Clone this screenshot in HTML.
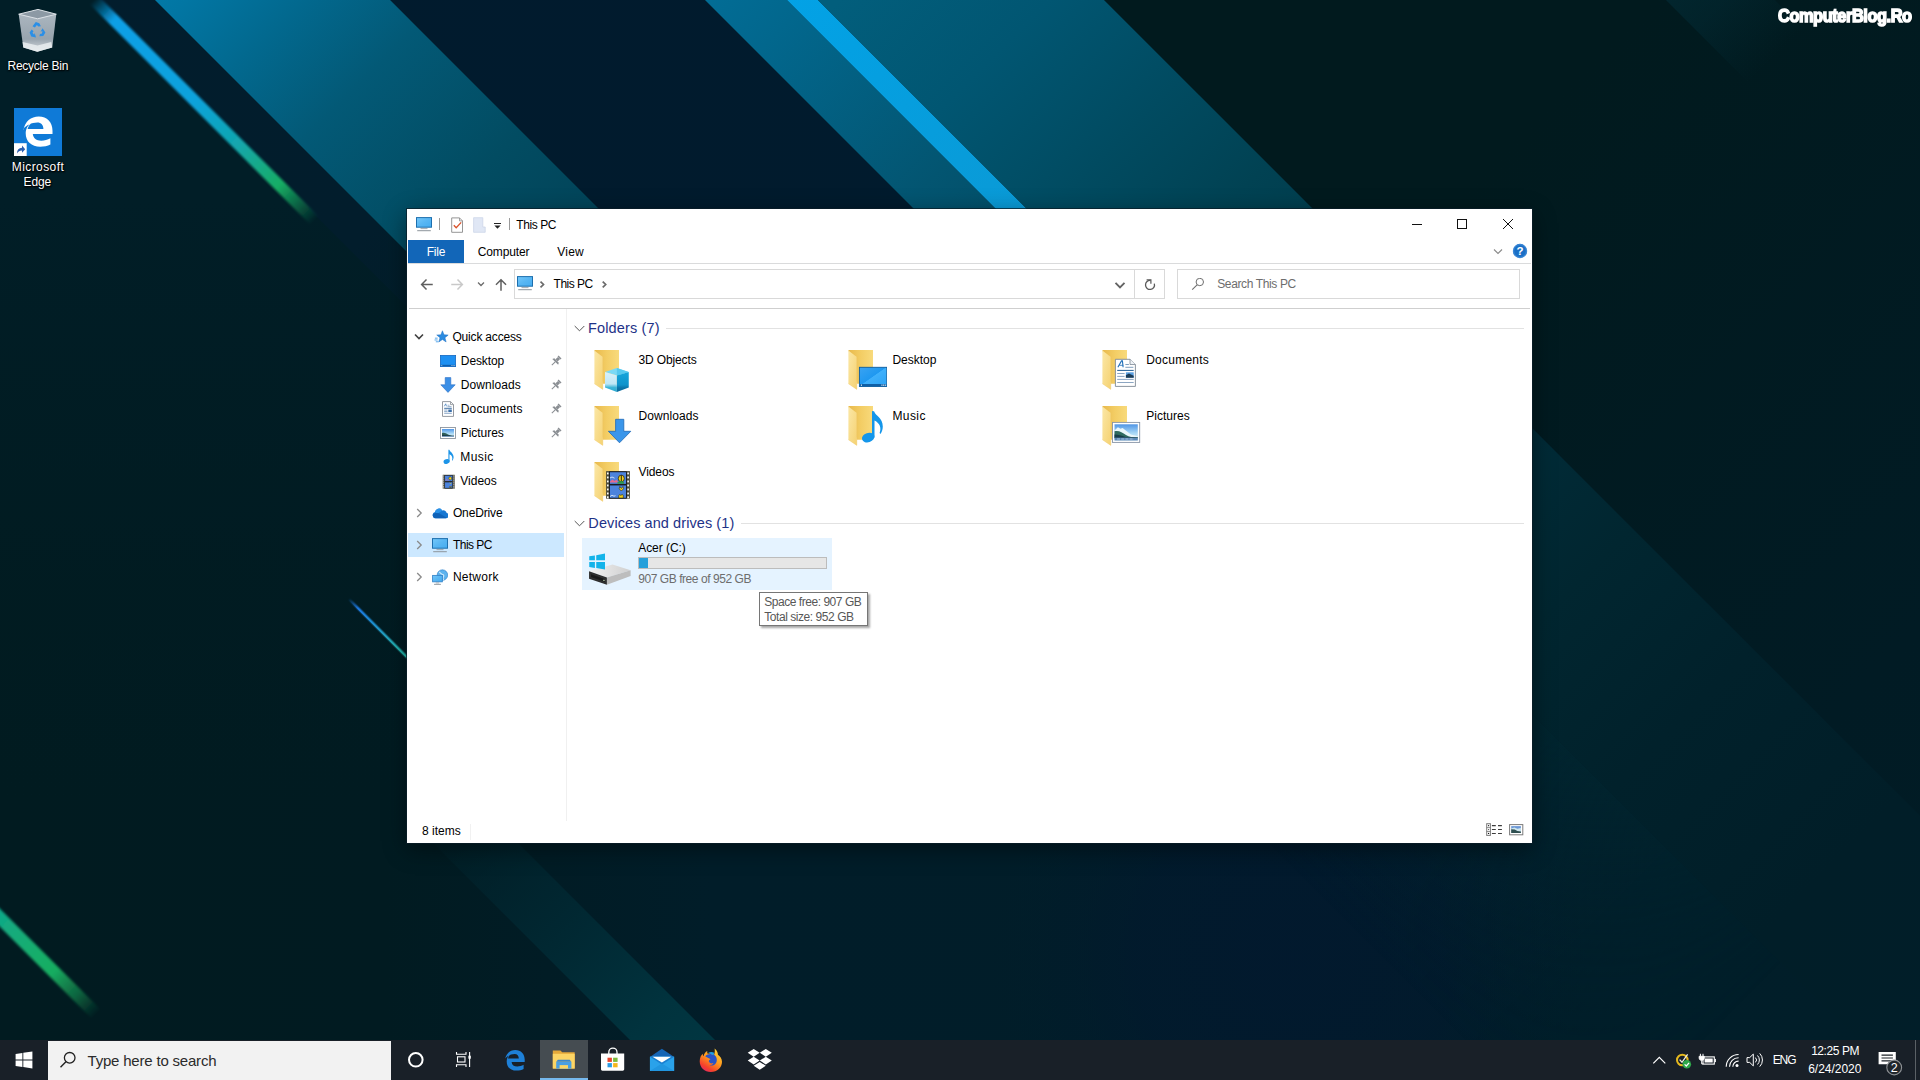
<!DOCTYPE html>
<html>
<head>
<meta charset="utf-8">
<title>This PC</title>
<style>
*{margin:0;padding:0;box-sizing:border-box;}
html,body{width:1920px;height:1080px;overflow:hidden;background:#021c28;font-family:"Liberation Sans",sans-serif;}
#desk{position:absolute;left:0;top:0;width:1920px;height:1080px;overflow:hidden;}
#wall{position:absolute;left:0;top:0;}
.t{position:absolute;white-space:nowrap;line-height:1;font-size:12px;color:#000;transform-origin:0 0;}
.abs{position:absolute;}
.dl{color:#fff;text-shadow:0 1px 2px rgba(0,0,0,.9),0 0 2px rgba(0,0,0,.8),1px 1px 1px rgba(0,0,0,.7);}
/* window */
#win{position:absolute;left:407px;top:209px;width:1125px;height:634px;background:#fff;box-shadow:0 0 0 1px rgba(10,30,40,.75),0 6px 22px rgba(0,0,0,.45);}
#filetab{position:absolute;left:1px;top:31px;width:56px;height:23px;background:#1266b8;}
.hl{position:absolute;height:1px;background:#dadbdc;}
.vl{position:absolute;width:1px;background:#dadbdc;}
/* taskbar */
#tb{position:absolute;left:0;top:1040px;width:1920px;height:40px;background:#192028;}
#tbs{position:absolute;left:48px;top:1px;width:343px;height:39px;background:#f2f2f2;}
</style>
</head>
<body>
<div id="desk">
<!--SYMS-->
<svg width="0" height="0" style="position:absolute">
<defs>
<linearGradient id="fb" x1="0" y1="0" x2="1" y2="0"><stop offset="0" stop-color="#e8b94c"/><stop offset=".5" stop-color="#f3cd64"/><stop offset="1" stop-color="#f8da7c"/></linearGradient>
<linearGradient id="ff" x1="0" y1="0" x2="1" y2="1"><stop offset="0" stop-color="#fbe7a6"/><stop offset="1" stop-color="#f5d272"/></linearGradient>
<linearGradient id="scr" x1="0" y1="0" x2="1" y2="1"><stop offset="0" stop-color="#3aa3f2"/><stop offset=".48" stop-color="#1f98f0"/><stop offset=".5" stop-color="#3fb0fb"/><stop offset="1" stop-color="#2aa2f5"/></linearGradient>
<linearGradient id="pcs" x1="0" y1="0" x2="1" y2="1"><stop offset="0" stop-color="#74c8fa"/><stop offset=".5" stop-color="#58b6f3"/><stop offset="1" stop-color="#45acf0"/></linearGradient>
<linearGradient id="cubL" x1="0" y1="0" x2="0" y2="1"><stop offset="0" stop-color="#d9f1fa"/><stop offset=".6" stop-color="#bfe7f5"/><stop offset=".78" stop-color="#3db6d8"/><stop offset="1" stop-color="#2aa8cf"/></linearGradient>
<linearGradient id="cubR" x1="0" y1="0" x2="0" y2="1"><stop offset="0" stop-color="#16a6dc"/><stop offset=".65" stop-color="#0e93cb"/><stop offset=".8" stop-color="#0a74a8"/><stop offset="1" stop-color="#096a9c"/></linearGradient>
<linearGradient id="sky" x1="0" y1="0" x2="0" y2="1"><stop offset="0" stop-color="#4f95e6"/><stop offset=".55" stop-color="#a8d8f6"/><stop offset="1" stop-color="#e6f4fb"/></linearGradient>
<linearGradient id="hdd" x1="0" y1="0" x2="1" y2="0"><stop offset="0" stop-color="#f2f2f2"/><stop offset="1" stop-color="#cfcfcf"/></linearGradient>
<symbol id="fold" viewBox="0 0 48 48">
<path d="M9.4 5H34v33.7H17.8z" fill="url(#fb)"/>
<path d="M9.4 5.6L17.8 11.9V44.4L9.4 38.7z" fill="url(#ff)"/>
<path d="M17.8 11.9V44.4L9.4 38.7" fill="none" stroke="#f0c866" stroke-width=".4"/>
</symbol>
<symbol id="ov3d" viewBox="0 0 48 48">
<path d="M20 26.900L31.900 23.100 43.750 26.900 31.900 30.600z" fill="#7ad9f5"/>
<path d="M31.900 23.100L43.750 26.900 31.900 30.600z" fill="#56c9ef"/>
<path d="M20 26.900L31.900 30.600V46.900L20 42.500z" fill="url(#cubL)"/>
<path d="M31.900 30.600L43.750 26.900V42.500L31.900 46.900z" fill="url(#cubR)"/>
</symbol>
<symbol id="ovdesk" viewBox="0 0 48 48" overflow="visible"><g transform="translate(1.1,0)">
<rect x="19.3" y="22.3" width="27.4" height="19.2" fill="url(#scr)" stroke="#0d5c9c" stroke-width=".9"/>
<rect x="19.8" y="39" width="26.4" height="2.2" fill="#0f5fa6"/>
<rect x="20.8" y="39.6" width="1.1" height="1.1" fill="#fff"/><rect x="41.3" y="39.6" width="1.1" height="1.1" fill="#fff"/><rect x="43" y="39.6" width="1.1" height="1.1" fill="#fff"/><rect x="44.7" y="39.6" width="1.1" height="1.1" fill="#fff"/>
</g></symbol>
<symbol id="ovdoc" viewBox="0 0 48 48"><g transform="translate(1.9,0)">
<path d="M20.5 14.3h14.6l5.4 5.2v21.9h-20z" fill="#fff" stroke="#7d8894" stroke-width=".9"/>
<path d="M35.1 14.3v5.2h5.4" fill="#eef2f6" stroke="#7d8894" stroke-width=".8"/>
<path d="M23 22.3l3.6-6.4h.9l.7 6.4" fill="none" stroke="#2370b8" stroke-width="1.1"/><path d="M24.4 20.3h4" stroke="#2370b8" stroke-width=".8"/>
<path d="M30.5 19.5h3.5M30.5 22.3h8" stroke="#5f86ad" stroke-width=".8"/>
<path d="M22.3 25.4h16.5" stroke="#1f5c94" stroke-width="1"/>
<path d="M22.3 28.5h7.4M22.3 31.4h7.4M22.3 34.4h16.5M22.3 37.5h16.5" stroke="#6f8fb2" stroke-width=".8"/>
<rect x="31" y="27.3" width="7.8" height="5.4" fill="#5b9fe0"/><path d="M31 32.7v-2.5l3-1.6 4.8 2.2v1.9z" fill="#1c3c56"/>
</g></symbol>
<symbol id="ovdl" viewBox="0 0 48 48">
<path d="M30.6 18.3h8.2v12h7L34.5 41.8 23.4 30.3h7.2z" fill="#3a96ea" stroke="#1e68b6" stroke-width=".8" stroke-linejoin="miter"/>
</symbol>
<symbol id="ovmus" viewBox="0 0 48 48">
<ellipse cx="29.2" cy="36.6" rx="6.4" ry="4.7" transform="rotate(-18 29.2 36.6)" fill="#1496ea"/>
<path d="M33 36.5V10.4c.5-.5 1.6-.5 2.2.2 1.200 4.200 8.600 6.400 8.600 14.800 0 3.200-1.100 5.600-2.300 7.600l-.9-.9c2-5.400.300-9.800-5.100-12.600v17z" fill="#1496ea"/>
</symbol>
<symbol id="ovpic" viewBox="0 0 48 48">
<rect x="19.5" y="21.4" width="27.2" height="20" fill="#fff" stroke="#8693a6" stroke-width=".9"/>
<rect x="21.5" y="23.3" width="23.3" height="16.2" fill="url(#sky)"/>
<path d="M21.500 29.500l3.400-3.200 2.500 1.400 2.200-.6 3.500 2.700 4.800 3.600 6.900 1.900v1.500h-23.300z" fill="#e9f6fa"/>
<path d="M21.500 30.300c2.200-.4 4.700-.3 6.900.9 3.100 1.700 5.900 4.100 9.700 4.700l6.700.4v.9h-23.300z" fill="#2f6a5e"/>
<path d="M21.500 33.500c3.500 0 7.500 1.200 11 2.500l12.300.4v.5h-23.300z" fill="#173c48"/>
<rect x="21.5" y="36.700" width="23.3" height="2.800" fill="#5b87b5"/><path d="M24 38h17" stroke="#a9c6e0" stroke-width=".9" stroke-dasharray="3 1.200"/>
</symbol>
<symbol id="ovvid" viewBox="0 0 48 48">
<rect x="21.100" y="14.100" width="23.800" height="27.600" fill="#4b4a38"/>
<rect x="24.400" y="14.800" width="17" height="12.500" fill="#4c83dc" stroke="#111" stroke-width=".8"/>
<rect x="24.400" y="28" width="17" height="13.200" fill="#4c83dc" stroke="#111" stroke-width=".8"/>
<g fill="#fff"><rect x="22" y="15.500" width="1.600" height="1.900"/><rect x="22" y="19.500" width="1.600" height="1.900"/><rect x="22" y="23.500" width="1.600" height="1.900"/><rect x="22" y="27.500" width="1.600" height="1.900"/><rect x="22" y="31.500" width="1.600" height="1.900"/><rect x="22" y="35.500" width="1.600" height="1.900"/><rect x="22" y="39.300" width="1.600" height="1.900"/>
<rect x="42.300" y="15.500" width="1.600" height="1.900"/><rect x="42.300" y="19.500" width="1.600" height="1.900"/><rect x="42.300" y="23.500" width="1.600" height="1.900"/><rect x="42.300" y="27.500" width="1.600" height="1.900"/><rect x="42.300" y="31.500" width="1.600" height="1.900"/><rect x="42.300" y="35.500" width="1.600" height="1.900"/><rect x="42.300" y="39.300" width="1.600" height="1.900"/></g>
<ellipse cx="36.300" cy="21.500" rx="3" ry="3.400" fill="#f2d21c" stroke="#111" stroke-width=".7"/><path d="M36.300 18.200v6.600" stroke="#111" stroke-width=".9"/>
<path d="M25 24.500l2.500-2 2 1.500 2-1.200 2 2.700h-8.500z" fill="#e86a8a"/><path d="M25 21l2-1 2.500 1.200" stroke="#dce9f7" stroke-width=".9" fill="none"/>
<path d="M32.500 26.800h6.500v-1.700l-2.800-1-3.700.9z" fill="#2e9a4c"/>
<path d="M34.800 29.500l1.500 2 1.600-2 .6 2.300-2.200 2.200-2.100-2.200z" fill="#f2d21c" stroke="#111" stroke-width=".5"/>
<path d="M33.700 41v-2.200c.6-1.500 1.500-1.700 2.200-.2.700-1.600 1.700-1.600 2.400.1v2.300z" fill="#f2d21c" stroke="#111" stroke-width=".5"/>
<path d="M25 39.500l2-1.200 2 .9 1.500-.5" stroke="#dce9f7" stroke-width=".9" fill="none"/>
</symbol>
<!-- small 16px icons -->
<symbol id="pc16" viewBox="0 0 16 16">
<rect x=".5" y="1.600" width="15" height="9.600" fill="url(#pcs)" stroke="#1d6fae" stroke-width="1"/>
<rect x="4.500" y="12.200" width="7" height=".9" fill="#9aa0a6"/><rect x="1.200" y="14.200" width="13.600" height="1" fill="#8d959c"/>
</symbol>
<symbol id="star16" viewBox="0 0 16 16">
<path d="M9.300.8l1.800 4.500 4.700.2-3.700 3 1.300 4.700-4.100-2.700-4 2.700 1.300-4.700L3 5.500l4.600-.2z" fill="#2b8be0" stroke="#1f6fc0" stroke-width=".5"/>
<path d="M1 9h3M.6 11h3.400M2 13h3" stroke="#49a0ea" stroke-width="1"/>
</symbol>
<symbol id="desk16" viewBox="0 0 16 16">
<rect x=".4" y="2.400" width="15.200" height="11.200" fill="#1e90f2" stroke="#1668c0" stroke-width=".8"/>
<rect x=".8" y="11.800" width="14.400" height="1.500" fill="#0f5fae"/><rect x="1.400" y="12.200" width=".8" height=".7" fill="#fff"/><rect x="11.500" y="12.200" width=".7" height=".7" fill="#fff"/><rect x="12.700" y="12.200" width=".7" height=".7" fill="#fff"/><rect x="13.900" y="12.200" width=".7" height=".7" fill="#fff"/>
</symbol>
<symbol id="dl16" viewBox="0 0 16 16">
<path d="M5.200.6h5.600v7.200h4.400L8 15.400.8 7.800h4.400z" fill="#3b8fe6" stroke="#2a6fc4" stroke-width=".6"/>
</symbol>
<symbol id="doc16" viewBox="0 0 16 16">
<path d="M2.500.6h8l3 3v11.800h-11z" fill="#fff" stroke="#8a8f96" stroke-width=".9"/><path d="M10.500.6v3h3" fill="none" stroke="#8a8f96" stroke-width=".8"/>
<path d="M4.300 5.300l1.400-2.500.8 2.500" fill="none" stroke="#3574b8" stroke-width=".7"/><path d="M7.500 4.200h2M7.500 5.600h4" stroke="#6f92ba" stroke-width=".7"/>
<path d="M4.200 7.300h7.600" stroke="#2a5f98" stroke-width=".9"/><path d="M4.200 9h3.300M4.200 10.600h3.300M4.200 12.300h7.600" stroke="#6f92ba" stroke-width=".8"/><rect x="8.300" y="8.500" width="3.500" height="2.500" fill="#3a6ea8"/>
</symbol>
<symbol id="pic16" viewBox="0 0 16 16">
<rect x=".5" y="2.500" width="15" height="11" fill="#fff" stroke="#8c949e" stroke-width=".9"/>
<rect x="2" y="4" width="12" height="8" fill="url(#sky)"/><path d="M2 8c2-.8 4 0 6 1.500 1.500 1 4 1.300 6 1.300v.4H2z" fill="#2f5f5a"/><path d="M2 9.800c3 0 6 .8 12 1V12H2z" fill="#1d3e4c"/><rect x="2" y="11" width="12" height="1" fill="#7a9cbd"/>
</symbol>
<symbol id="mus16" viewBox="0 0 16 16">
<ellipse cx="5.600" cy="12.500" rx="3.100" ry="2.300" transform="rotate(-18 5.600 12.500)" fill="#1c94e8"/>
<path d="M7.400 12.600V.8c.4-.3.900-.2 1.100.2.600 2 4.100 3.200 4.100 7.100 0 1.500-.5 2.700-1.100 3.600l-.5-.4c.9-2.600.1-4.700-2.500-6v7.300z" fill="#1c94e8"/>
</symbol>
<symbol id="vid16" viewBox="0 0 16 16">
<rect x="1.800" y=".8" width="12.400" height="14.400" fill="#4b4a3a"/>
<rect x="3.900" y="1.400" width="8.200" height="6.100" fill="#4c83dc" stroke="#111" stroke-width=".5"/><rect x="3.900" y="8.300" width="8.200" height="6.300" fill="#4c83dc" stroke="#111" stroke-width=".5"/>
<g fill="#fff"><rect x="2.300" y="1.600" width=".9" height="1"/><rect x="2.300" y="3.700" width=".9" height="1"/><rect x="2.300" y="5.800" width=".9" height="1"/><rect x="2.300" y="7.900" width=".9" height="1"/><rect x="2.300" y="10" width=".9" height="1"/><rect x="2.300" y="12.100" width=".9" height="1"/><rect x="2.300" y="13.900" width=".9" height=".9"/>
<rect x="12.800" y="1.600" width=".9" height="1"/><rect x="12.800" y="3.700" width=".9" height="1"/><rect x="12.800" y="5.800" width=".9" height="1"/><rect x="12.800" y="7.900" width=".9" height="1"/><rect x="12.800" y="10" width=".9" height="1"/><rect x="12.800" y="12.100" width=".9" height="1"/><rect x="12.800" y="13.900" width=".9" height=".9"/></g>
<ellipse cx="9.500" cy="4.500" rx="1.400" ry="1.700" fill="#f2d21c" stroke="#111" stroke-width=".4"/><path d="M4.300 6.500l1.300-1 1 .7 1-.5.800.8z" fill="#e86a8a"/><path d="M8.500 13.800c.4-1.500 1-1.500 1.300 0 .4-1.500 1-1.500 1.400 0z" fill="#f2d21c" stroke="#111" stroke-width=".3"/><path d="M9 9l.8 1 .8-1" stroke="#f2d21c" stroke-width=".7" fill="none"/>
</symbol>
<symbol id="od16" viewBox="0 0 16 12">
<path d="M3.600 11.200A3.100 3.100 0 0 1 3 5.100 3.900 3.900 0 0 1 10.300 3.600a3.300 3.300 0 0 1 4.400 2.300 2.700 2.700 0 0 1-.9 5.300z" fill="#1677d2"/>
<path d="M3 5.100A3.900 3.900 0 0 1 10.300 3.600l-4.800 3.200z" fill="#2a92e8"/>
<path d="M.9 7.300c2.600-1.800 5.600-1.600 8.300.2l5.500 3.300c-.3.300-.6.400-.9.400H3.600A3.100 3.100 0 0 1 .9 7.300z" fill="#0f62b8"/>
</symbol>
<symbol id="net16" viewBox="0 0 16 16">
<circle cx="10.300" cy="6" r="5.200" fill="#5db3ee" stroke="#2d7fc8" stroke-width=".6"/><path d="M7 2.800c1.300 1 1.600 2.200 3.200 2.500 1.600.2 1.800 1.600 1 2.700-.7.900-.2 2 .4 2.800" fill="none" stroke="#cfe9fb" stroke-width="1.100"/>
<rect x=".6" y="6.300" width="9.600" height="6.400" fill="url(#pcs)" stroke="#2f7fc6" stroke-width=".8"/><rect x="3.700" y="13.400" width="3.400" height=".8" fill="#9aa0a6"/><rect x="2" y="14.700" width="6.800" height=".9" fill="#8d959c"/>
</symbol>
<symbol id="pin" viewBox="0 0 12 12">
<g transform="rotate(45 6 6)" fill="#8a8e93"><rect x="3.900" y=".3" width="4.200" height="1.400"/><rect x="4.500" y="1.700" width="3" height="3.500"/><path d="M2.800 5.200h6.400l.9 1.900H1.900z"/><rect x="5.500" y="7.100" width="1" height="4.800"/></g>
</symbol>
</defs>
</svg>
<!--/SYMS-->
<!--WALL-->
<svg id="wall" width="1920" height="1080" viewBox="0 0 1920 1080">
<defs>
<linearGradient id="gbase" x1="0" y1="0" x2="1920" y2="0" gradientUnits="userSpaceOnUse">
<stop offset="0" stop-color="#011b20"/><stop offset=".2" stop-color="#011b21"/><stop offset=".37" stop-color="#011d29"/><stop offset="1" stop-color="#011e29"/>
</linearGradient>
<linearGradient id="gleft" x1="0" y1="200" x2="0" y2="800" gradientUnits="userSpaceOnUse">
<stop offset="0" stop-color="#011e27" stop-opacity="1"/><stop offset="1" stop-color="#011c22" stop-opacity="0"/>
</linearGradient>
<linearGradient id="gUR" x1="0" y1="0" x2="2121" y2="0" gradientUnits="userSpaceOnUse">
<stop offset="0" stop-color="#011a1e"/><stop offset=".55" stop-color="#011a1e"/><stop offset=".85" stop-color="#011b24"/><stop offset="1" stop-color="#011c26"/>
</linearGradient>

<linearGradient id="gD" x1="0" y1="0" x2="2121" y2="0" gradientUnits="userSpaceOnUse">
<stop offset="0" stop-color="#011b2e"/><stop offset=".45" stop-color="#011b2d"/><stop offset=".62" stop-color="#011d2a" stop-opacity=".5"/><stop offset=".7" stop-color="#011d29" stop-opacity="0"/>
</linearGradient>
<linearGradient id="gN" x1="0" y1="0" x2="2121" y2="0" gradientUnits="userSpaceOnUse"><stop offset="0" stop-color="#021d2d"/><stop offset=".2" stop-color="#021d2c"/><stop offset=".34" stop-color="#011e28" stop-opacity="0"/></linearGradient>
<linearGradient id="gRay" x1="1170" y1="0" x2="1295" y2="0" gradientUnits="userSpaceOnUse"><stop offset="0" stop-color="#03303c" stop-opacity=".55"/><stop offset=".4" stop-color="#03303c" stop-opacity=".4"/><stop offset="1" stop-color="#03303c" stop-opacity="0"/></linearGradient>
<radialGradient id="gNav" cx="1290" cy="960" r="300" gradientUnits="userSpaceOnUse"><stop offset="0" stop-color="#02192e" stop-opacity=".95"/><stop offset=".5" stop-color="#02192e" stop-opacity=".7"/><stop offset="1" stop-color="#011c2b" stop-opacity="0"/></radialGradient>
<linearGradient id="gW1" x1="0" y1="0" x2="2121" y2="0" gradientUnits="userSpaceOnUse">
<stop offset="0" stop-color="#0384b8"/><stop offset=".062" stop-color="#0276a3"/><stop offset=".1" stop-color="#02698f"/><stop offset=".148" stop-color="#035976"/><stop offset=".217" stop-color="#024c62"/><stop offset=".32" stop-color="#023c50"/><stop offset=".45" stop-color="#012c3c"/><stop offset=".62" stop-color="#011f2c" stop-opacity="0"/>
</linearGradient>
<linearGradient id="gB1" x1="0" y1="0" x2="2121" y2="0" gradientUnits="userSpaceOnUse">
<stop offset=".22" stop-color="#026f99"/><stop offset=".27" stop-color="#02678d"/><stop offset=".37" stop-color="#035571"/><stop offset=".5" stop-color="#024052"/><stop offset=".62" stop-color="#012e3b" stop-opacity=".8"/><stop offset=".72" stop-color="#012630" stop-opacity="0"/>
</linearGradient>
<linearGradient id="gB2" x1="0" y1="0" x2="2121" y2="0" gradientUnits="userSpaceOnUse">
<stop offset=".22" stop-color="#02a4ea"/><stop offset=".3" stop-color="#04a0e2"/><stop offset=".41" stop-color="#0a9ad6"/><stop offset=".55" stop-color="#0877a4" stop-opacity=".8"/><stop offset=".7" stop-color="#033040" stop-opacity="0"/>
</linearGradient>
<linearGradient id="gGlow" x1="0" y1="-578.400" x2="0" y2="-300" gradientUnits="userSpaceOnUse">
<stop offset="0" stop-color="#012630" stop-opacity=".9"/><stop offset=".5" stop-color="#012330" stop-opacity=".4"/><stop offset="1" stop-color="#011e29" stop-opacity="0"/>
</linearGradient>
<linearGradient id="gGlowS" x1="1400" y1="0" x2="2121" y2="0" gradientUnits="userSpaceOnUse">
<stop offset="0" stop-color="#fff" stop-opacity="1"/><stop offset=".3" stop-color="#fff" stop-opacity="1"/><stop offset=".75" stop-color="#fff" stop-opacity="0"/>
</linearGradient>
<mask id="mGlow" maskUnits="userSpaceOnUse" x="1400" y="-600" width="760" height="340"><rect x="1400" y="-600" width="760" height="340" fill="url(#gGlowS)"/></mask>
<linearGradient id="gB3" x1="0" y1="0" x2="2121" y2="0" gradientUnits="userSpaceOnUse">
<stop offset=".28" stop-color="#025e7c"/><stop offset=".35" stop-color="#015672"/><stop offset=".477" stop-color="#014253"/><stop offset=".6" stop-color="#013240"/><stop offset=".66" stop-color="#012b37"/><stop offset=".72" stop-color="#012630"/><stop offset=".8" stop-color="#01212b"/><stop offset=".9" stop-color="#011e28"/><stop offset="1" stop-color="#011e29"/>
</linearGradient>
<linearGradient id="gF" x1="0" y1="0" x2="2121" y2="0" gradientUnits="userSpaceOnUse">
<stop offset=".41" stop-color="#012630" stop-opacity="0"/><stop offset=".47" stop-color="#012832" stop-opacity=".65"/><stop offset=".557" stop-color="#01333e"/><stop offset=".63" stop-color="#013b47"/>
</linearGradient>
<linearGradient id="gA" x1="0" y1="0" x2="312" y2="0" gradientUnits="userSpaceOnUse">
<stop offset="0" stop-color="#0a9fe6" stop-opacity="0"/><stop offset=".09" stop-color="#0a9fe6"/><stop offset=".45" stop-color="#0ea2dc"/><stop offset=".65" stop-color="#12a6ae"/><stop offset=".84" stop-color="#16ad64"/><stop offset="1" stop-color="#16ad62" stop-opacity="0"/>
</linearGradient>
<linearGradient id="gL" x1="670" y1="0" x2="900" y2="0" gradientUnits="userSpaceOnUse">
<stop offset="0" stop-color="#1d78e0" stop-opacity="0"/><stop offset=".06" stop-color="#1d78e0"/><stop offset=".3" stop-color="#22b0b0"/><stop offset=".5" stop-color="#22c090"/><stop offset="1" stop-color="#22c090"/>
</linearGradient>
<linearGradient id="gG" x1="560" y1="0" x2="790" y2="0" gradientUnits="userSpaceOnUse">
<stop offset="0" stop-color="#0fa58c"/><stop offset=".36" stop-color="#10a888"/><stop offset=".62" stop-color="#17ae6a"/><stop offset=".72" stop-color="#18ac60"/><stop offset=".86" stop-color="#168c50" stop-opacity=".65"/><stop offset=".98" stop-color="#147a48" stop-opacity="0"/>
</linearGradient>
<filter id="bl1" x="-5%" y="-50%" width="110%" height="200%"><feGaussianBlur stdDeviation=".9"/></filter>
<filter id="bl05" x="-5%" y="-80%" width="110%" height="260%"><feGaussianBlur stdDeviation=".6"/></filter>
</defs>
<rect width="1920" height="1080" fill="url(#gbase)"/>
<rect width="760" height="1080" fill="url(#gleft)"/>
<rect x="900" y="640" width="800" height="440" fill="url(#gNav)"/>
<g transform="rotate(45)">
<!-- d = -c/1.4142 -->
<rect x="0" y="-1400" width="2121" height="619.400" fill="url(#gUR)"/>
<rect x="1100" y="-1255" width="300" height="77" fill="url(#gRay)"/>
<rect x="1400" y="-578.400" width="721" height="278.400" fill="url(#gGlow)" mask="url(#mGlow)"/>
<rect x="0" y="-498.500" width="2121" height="222.700" fill="url(#gD)"/>
<rect x="0" y="-109.600" width="2121" height="38.900" fill="url(#gN)"/>
<rect x="0" y="-275.800" width="2121" height="166.200" fill="url(#gW1)"/>
<rect x="0" y="-556.500" width="2121" height="58" fill="url(#gB1)"/>
<rect x="0" y="-578.400" width="2121" height="21.900" fill="url(#gB2)"/>
<rect x="0" y="-780.600" width="2121" height="202.200" fill="url(#gB3)"/>
<rect x="0" y="229.800" width="2121" height="60.100" fill="url(#gF)"/>
<rect x="670" y="175.600" width="300" height="2.600" fill="url(#gL)" filter="url(#bl05)"/>
<rect x="560" y="642.600" width="240" height="12.800" fill="url(#gG)" filter="url(#bl1)"/>
</g>
<g transform="translate(94,0) rotate(45)"><rect x="0" y="-5.900" width="312" height="11.800" fill="url(#gA)" filter="url(#bl1)"/></g>
</svg>
<!--/WALL-->
<!--DESKICONS-->
<svg class="abs" style="left:14px;top:6px" width="48" height="48" viewBox="0 0 48 48"><defs><linearGradient id="rb" x1="0" y1="0" x2="0" y2="1"><stop offset="0" stop-color="#aeb9c2"/><stop offset=".7" stop-color="#98a4ae"/><stop offset="1" stop-color="#d9dee2"/></linearGradient></defs>
<path d="M4.700 8.200L24 3.400 42.300 8.200 38.200 41.500 23.300 45.800 9.300 41.500z" fill="url(#rb)"/>
<path d="M4.700 8.200L24 3.400 42.300 8.200 23.600 12.800z" fill="#8c99a4" stroke="#e3e8ec" stroke-width=".9"/>
<path d="M9.300 41.500l14 4.300 14.900-4.300-1-5.500-13.700 3.400L8.600 36z" fill="#e9edf0" opacity=".85"/>
<g fill="#2b8fe6"><path d="M18.500 20.300l3.300-4.300 3.500 1.200 1.600 3-2.600.4-1.400-1.700-2 2.700z"/><path d="M28.600 22.200l2.800 4.400-2.100 3.300-3.900.3.600-2.300 2-.3.400-2.500-1.900.6z"/><path d="M22 31.600l-4.800-1.200-1.600-3.900 2.100-3 1.800 1.700-1 1.600 1.600 1.900.6-1.700z"/></g>
</svg>
<div class="t dl" id="d_rb" style="left:7.52px;top:59.80px;letter-spacing:-0.250px">Recycle Bin</div>
<div class="abs" style="left:14px;top:108px;width:48px;height:48px;background:#0f7ad7"></div>
<svg class="abs" style="left:14px;top:108px" width="48" height="48" viewBox="0 0 48 48"><path d="M9.300 22.300C10.800 13.500 17 8.500 24.700 8.500c8.500 0 13.800 6 13.800 14.200v3.400H18.800c.4 4.300 3.700 6.700 8.400 6.700 3.400 0 6.400-.9 9.200-2.500v6.200c-2.900 1.500-6.400 2.200-10.200 2.200-8.800 0-14.500-5.100-14.500-13.400 0-4.800 2.300-8.700 6.400-10.900-2.400 1.900-3.900 3.900-4.500 6.700h15.800c0-3.900-2.200-6.500-6.100-6.500-5.700 0-11.200 2.900-14 6.300z" fill="#fff"/>
<rect x="0" y="35.200" width="12.700" height="12.800" fill="#fff"/><path d="M3 45.500c0-3.500 1.800-5.600 5-5.700v-2.200l3.200 3.600-3.200 3.500v-2.300c-2.300 0-3.800.9-5 3.100z" fill="#2a5fb0"/></svg>
<div class="t dl" id="d_ms" style="left:11.82px;top:161.00px;letter-spacing:0.409px">Microsoft</div>
<div class="t dl" id="d_edge" style="left:23.62px;top:176px;letter-spacing:-0.159px">Edge</div>
<div class="t" id="wm" style="left:1777.5px;top:6.1px;font-size:19px;font-weight:bold;color:#fff;letter-spacing:-.5px;-webkit-text-stroke:1.6px #fff;text-shadow:1px 1px 1px rgba(0,0,0,.5);transform:scaleX(.862)">ComputerBlog.Ro</div>
<!--/DESKICONS-->
<!--WINDOW-->
<div id="win">
<!-- title bar -->
<svg class="abs" style="left:9px;top:6.700px" width="16" height="16"><use href="#pc16"/></svg>
<svg class="abs" style="left:43px;top:7px" width="54" height="18" viewBox="0 0 54 18">
<path d="M1.700 1.900h7.800l3 3v11.400H1.700z" fill="#fff" stroke="#8a8a8a" stroke-width=".9"/><path d="M9.500 1.900v3h3" fill="none" stroke="#8a8a8a" stroke-width=".8"/>
<path d="M3.800 9.200l2.400 2.600 5-5.400" fill="none" stroke="#d9532c" stroke-width="1.300"/>
<path d="M23.600 1.700h9.200v9.300h2.400v5.300H23.600z" fill="#e0e7f5" stroke="#cdd6e8" stroke-width=".8"/>
<rect x="44" y="7" width="7" height="1" fill="#222"/><path d="M44.400 9.600h6.200l-3.100 3.200z" fill="#222"/>
</svg>
<div class="vl" style="left:32px;top:9px;height:12px;background:#9a9a9a"></div>
<div class="vl" style="left:102px;top:9px;height:12px;background:#9a9a9a"></div>
<div class="t" id="t_title" style="left:109.22px;top:9.85px;letter-spacing:-0.419px">This PC</div>
<svg class="abs" style="left:1000px;top:5px" width="120" height="22" viewBox="0 0 120 22"><g stroke="#111" stroke-width="1" fill="none"><path d="M5 10.5h10"/><rect x="50.5" y="5.5" width="9" height="9"/><path d="M96 5l10 10M106 5l-10 10"/></g></svg>
<!-- ribbon tabs -->
<div id="filetab"></div>
<div class="t" id="t_file" style="left:19.72px;top:37px;color:#fff;letter-spacing:-0.178px">File</div>
<div class="t" id="t_computer" style="left:70.72px;top:37px;letter-spacing:-0.125px">Computer</div>
<div class="t" id="t_view" style="left:150.22px;top:37px;letter-spacing:0.251px">View</div>
<svg class="abs" style="left:1086px;top:38.600px" width="10" height="8" viewBox="0 0 10 8"><path d="M1 1.5l4 4 4-4" stroke="#8a8a8a" stroke-width="1.1" fill="none"/></svg>
<svg class="abs" style="left:1105px;top:34px" width="16" height="16" viewBox="0 0 16 16"><circle cx="8" cy="8" r="7.2" fill="#1a6fc6"/><circle cx="8" cy="8" r="6.4" fill="none" stroke="#5aa0e6" stroke-width=".6"/><text x="8" y="12" text-anchor="middle" font-family="Liberation Sans" font-weight="bold" font-size="11.5" fill="#fff">?</text></svg>
<div class="hl" style="left:1px;top:54px;width:1123px"></div>
<!-- nav row -->
<svg class="abs" style="left:12px;top:68px" width="90" height="16" viewBox="0 0 90 16"><g fill="none" stroke-width="1.5" stroke-linecap="square"><path d="M3 7.5h10M7 3L2.6 7.5 7 12" stroke="#5f5f5f"/><path d="M33 7.5h10M39 3l4.4 4.5L39 12" stroke="#c9c9c9"/><path d="M59.5 6l2.5 2.5L64.5 6" stroke="#6a6a6a" stroke-width="1.3"/><path d="M82 13V3M77.5 7.2L82 2.8l4.5 4.4" stroke="#5f5f5f"/></g></svg>
<div class="abs" style="left:107px;top:60px;width:651px;height:30px;border:1px solid #d9d9d9;"></div>
<div class="vl" style="left:727px;top:61px;height:28px;background:#d9d9d9"></div>
<svg class="abs" style="left:110px;top:65.500px" width="16" height="16"><use href="#pc16"/></svg>
<svg class="abs" style="left:132px;top:71px" width="70" height="9" viewBox="0 0 70 9"><g fill="none" stroke="#6a6a6a" stroke-width="1.700"><path d="M1.500 1.600l3 2.900-3 2.900"/><path d="M63.700 1.600l3 2.900-3 2.900"/></g></svg>
<div class="t" id="t_addr" style="left:146.62px;top:69px;letter-spacing:-0.503px">This PC</div>
<svg class="abs" style="left:707px;top:72px" width="12" height="8" viewBox="0 0 12 8"><path d="M1.500 1.800L6 6.300l4.500-4.500" stroke="#636363" stroke-width="1.900" fill="none"/></svg>
<svg class="abs" style="left:736px;top:69px" width="14" height="14" viewBox="0 0 14 14"><path d="M7.600 2.500A4.500 4.500 0 1 0 11.300 5.600" stroke="#5a5a5a" stroke-width="1.300" fill="none"/><path d="M3.600 1.900H7.900V5.800" stroke="#5a5a5a" stroke-width="1.200" fill="none"/></svg>
<div class="abs" style="left:770px;top:60px;width:343px;height:30px;border:1px solid #d9d9d9;"></div>
<svg class="abs" style="left:784px;top:69px" width="14" height="13" viewBox="0 0 14 13"><circle cx="8.800" cy="4" r="3.700" stroke="#6f6f6f" stroke-width="1" fill="none"/><path d="M6.100 6.800L1.200 11.700" stroke="#6f6f6f" stroke-width="1.100"/></svg>
<div class="t" id="t_search" style="left:810.22px;top:69px;color:#6d6d6d;letter-spacing:-0.373px">Search This PC</div>
<div class="hl" style="left:2px;top:99px;width:1121px;background:#cfcfcf"></div>
<!-- nav pane -->
<div class="vl" style="left:159px;top:100px;height:512px;background:#f0f0f0"></div>
<div class="abs" style="left:1px;top:324px;width:156px;height:24px;background:#cce8ff"></div>
<!--NAV-->
<svg class="abs" style="left:7px;top:124px" width="10" height="8" viewBox="0 0 10 8"><path d="M1 1.500l4 4 4-4" stroke="#404040" stroke-width="1.600" fill="none"/></svg>
<svg class="abs" style="left:27px;top:120.5px" width="14.5" height="14.5"><use href="#star16"/></svg>
<div class="t" id="n_qa" style="left:45.48px;top:121.85px;letter-spacing:-0.186px">Quick access</div>
<svg class="abs" style="left:33px;top:144px" width="16" height="16"><use href="#desk16"/></svg>
<div class="t" id="n_desktop" style="left:53.82px;top:145.85px;letter-spacing:-0.096px">Desktop</div>
<svg class="abs" style="left:33px;top:168px" width="16" height="16"><use href="#dl16"/></svg>
<div class="t" id="n_downloads" style="left:53.82px;top:169.85px;letter-spacing:0.073px">Downloads</div>
<svg class="abs" style="left:33px;top:192px" width="16" height="16"><use href="#doc16"/></svg>
<div class="t" id="n_documents" style="left:53.82px;top:193.85px;letter-spacing:0.126px">Documents</div>
<svg class="abs" style="left:33px;top:215.5px" width="16" height="16"><use href="#pic16"/></svg>
<div class="t" id="n_pictures" style="left:53.82px;top:217.85px;letter-spacing:-0.057px">Pictures</div>
<svg class="abs" style="left:34px;top:240px" width="16" height="16"><use href="#mus16"/></svg>
<div class="t" id="n_music" style="left:53.22px;top:241.85px;letter-spacing:0.453px">Music</div>
<svg class="abs" style="left:33.5px;top:264.5px" width="15.5" height="15.5"><use href="#vid16"/></svg>
<div class="t" id="n_videos" style="left:53.22px;top:265.85px;letter-spacing:0.016px">Videos</div>
<svg class="abs" style="left:143px;top:146px" width="12" height="12"><use href="#pin"/></svg>
<svg class="abs" style="left:143px;top:170px" width="12" height="12"><use href="#pin"/></svg>
<svg class="abs" style="left:143px;top:194px" width="12" height="12"><use href="#pin"/></svg>
<svg class="abs" style="left:143px;top:218px" width="12" height="12"><use href="#pin"/></svg>
<svg class="abs" style="left:9px;top:299px" width="7" height="10" viewBox="0 0 7 10"><path d="M1.200 1l4 4-4 4" stroke="#8a8a8a" stroke-width="1.300" fill="none"/></svg>
<svg class="abs" style="left:9px;top:331px" width="7" height="10" viewBox="0 0 7 10"><path d="M1.200 1l4 4-4 4" stroke="#8a8a8a" stroke-width="1.300" fill="none"/></svg>
<svg class="abs" style="left:9px;top:363px" width="7" height="10" viewBox="0 0 7 10"><path d="M1.200 1l4 4-4 4" stroke="#8a8a8a" stroke-width="1.300" fill="none"/></svg>
<svg class="abs" style="left:25px;top:298px" width="16" height="12"><use href="#od16"/></svg>
<div class="t" id="n_onedrive" style="left:45.93px;top:297.85px;letter-spacing:-0.147px">OneDrive</div>
<svg class="abs" style="left:25px;top:327.5px" width="16" height="16"><use href="#pc16"/></svg>
<div class="t" id="n_thispc" style="left:45.93px;top:329.85px;letter-spacing:-0.521px">This PC</div>
<svg class="abs" style="left:24.8px;top:359.8px" width="16.2" height="16.2"><use href="#net16"/></svg>
<div class="t" id="n_network" style="left:45.93px;top:361.85px;letter-spacing:0.256px">Network</div>
<!--/NAV-->
<!-- content -->
<!--CONTENT-->
<svg class="abs" style="left:167px;top:115.5px" width="11" height="7" viewBox="0 0 11 7"><path d="M.700 1l4.800 4.800L10.300 1" stroke="#555" stroke-width="1" fill="none"/></svg>
<div class="t" id="c_folders" style="left:180.96px;top:111.50px;font-size:14.5px;color:#1e3287;letter-spacing:0.158px">Folders (7)</div>
<div class="hl" style="left:259px;top:119px;width:858px;background:#e2e2e2"></div>
<svg class="abs" style="left:178px;top:136px" width="48" height="48"><use href="#fold"/><use href="#ov3d"/></svg>
<div class="t" id="c_3d" style="left:231.43px;top:144.6px;letter-spacing:-0.122px">3D Objects</div>
<svg class="abs" style="left:431.7px;top:136px" width="48" height="48"><use href="#fold"/><use href="#ovdesk"/></svg>
<div class="t" id="c_desktop" style="left:485.43px;top:144.6px;letter-spacing:0.005px">Desktop</div>
<svg class="abs" style="left:685.6px;top:136px" width="48" height="48"><use href="#fold"/><use href="#ovdoc"/></svg>
<div class="t" id="c_documents" style="left:739.23px;top:144.6px;letter-spacing:0.233px">Documents</div>
<svg class="abs" style="left:178px;top:192px" width="48" height="48"><use href="#fold"/><use href="#ovdl"/></svg>
<div class="t" id="c_downloads" style="left:231.43px;top:200.6px;letter-spacing:0.098px">Downloads</div>
<svg class="abs" style="left:431.7px;top:192px" width="48" height="48"><use href="#fold"/><use href="#ovmus"/></svg>
<div class="t" id="c_music" style="left:485.43px;top:200.6px;letter-spacing:0.427px">Music</div>
<svg class="abs" style="left:685.6px;top:192px" width="48" height="48"><use href="#fold"/><use href="#ovpic"/></svg>
<div class="t" id="c_pictures" style="left:739.23px;top:200.6px;letter-spacing:0.029px">Pictures</div>
<svg class="abs" style="left:178px;top:248px" width="48" height="48"><use href="#fold"/><use href="#ovvid"/></svg>
<div class="t" id="c_videos" style="left:231.43px;top:256.6px;letter-spacing:-0.065px">Videos</div>
<svg class="abs" style="left:167px;top:310.5px" width="11" height="7" viewBox="0 0 11 7"><path d="M.700 1l4.800 4.800L10.300 1" stroke="#555" stroke-width="1" fill="none"/></svg>
<div class="t" id="c_devices" style="left:181.36px;top:306.50px;font-size:14.5px;color:#1e3287;letter-spacing:0.077px">Devices and drives (1)</div>
<div class="hl" style="left:334px;top:314px;width:783px;background:#e2e2e2"></div>
<div class="abs" style="left:175px;top:329px;width:250px;height:52px;background:#e5f3ff"></div>
<svg class="abs" style="left:179px;top:341px" width="48" height="40" viewBox="0 0 48 40">
<path d="M3.060 21.250L26.500 14.400 44.600 20.300 20.900 27.500z" fill="url(#hdd)"/>
<path d="M20.900 27.500L44.600 20.300V25.900L20.900 34.700z" fill="#bdbdbd"/>
<path d="M3.060 21.250L20.900 27.500V34.700L3.060 28.750z" fill="#2c2c2c"/>
<path d="M4.600 23.600L19.400 28.800V32.400L4.600 27.400z" fill="#1a1a1a" stroke="#4a4a4a" stroke-width=".4"/>
<rect x="17.300" y="29.800" width="1.300" height="1.100" fill="#cfe8c0"/>
<path d="M3.250 6.200L8.900 5.400V10.300H3.250zM10.250 5.200L19 3.400V10.300H10.250zM3.250 12H8.900V17.900L3.250 17.100zM10.250 12H19V19.400L10.250 18.100z" fill="#12b3ea"/>
</svg>
<div class="t" id="c_acer" style="left:231.22px;top:333.2px;letter-spacing:-0.055px">Acer (C:)</div>
<div class="abs" style="left:231px;top:348px;width:189px;height:12px;background:#e6e6e6;border:1px solid #bcbcbc"><div style="width:9px;height:10px;background:#26a0da"></div></div>
<div class="t" id="c_free" style="left:231.22px;top:363.60px;color:#6d6d6d;letter-spacing:-0.441px">907 GB free of 952 GB</div>
<div class="abs" style="left:352px;top:383px;width:109px;height:34px;background:#fff;border:1px solid #767676;box-shadow:2px 2px 2px rgba(0,0,0,.35)"></div>
<div class="t" id="c_tt1" style="left:357.22px;top:386.5px;color:#575757;letter-spacing:-0.462px">Space free: 907 GB</div>
<div class="t" id="c_tt2" style="left:357.22px;top:401.5px;color:#575757;letter-spacing:-0.443px">Total size: 952 GB</div>
<!--/CONTENT-->
<!-- status -->
<div class="t" id="t_items" style="left:14.93px;top:616px;letter-spacing:0.029px">8 items</div>
<div class="vl" style="left:63px;top:615px;height:16px;background:#f1f1f1"></div>
<svg class="abs" style="left:1078px;top:613px" width="40" height="15" viewBox="0 0 40 15">
<rect x="1.700" y="1.700" width="3.700" height="11.700" fill="#fff" stroke="#7a7a7a" stroke-width="1"/><path d="M1.700 5.600h3.700M1.700 9.500h3.700" stroke="#7a7a7a" stroke-width=".8"/>
<rect x="3" y="3.100" width="1.100" height="1.100" fill="#222"/><rect x="3" y="7" width="1.100" height="1.100" fill="#666"/><rect x="3" y="10.900" width="1.100" height="1.100" fill="#111"/>
<path d="M6.900 3.600h3.900M13 3.600h3.900M6.900 7.500h3.900M13 7.500h3.900M6.900 11.500h3.900M13 11.500h3.900" stroke="#3c3c3c" stroke-width="1.100"/>
<rect x="24.600" y="2.600" width="13.200" height="10.200" fill="#fff" stroke="#7a7a7a" stroke-width="1"/>
<rect x="26.200" y="4.100" width="9.700" height="6.900" fill="#6c98d6"/><path d="M26.200 6.500l3.200-1 3 1.200 3.500-.6V11h-9.700z" fill="#cfe6ee"/><path d="M26.200 7.200l3.500.3 2.700 1.600 3.500.4V11h-9.700z" fill="#2f4f50"/>
</svg>
</div>
<!--/WINDOW-->
<!--TASKBAR-->
<div id="tb">
<svg class="abs" style="left:15px;top:11px" width="18" height="18" viewBox="0 0 18 18"><path d="M.6 2.900L7.400 2v6.500H.6zM8.300 1.800L17.400.5v8H8.300zM.6 9.400h6.800v6.500L.6 15zM8.300 9.400h9.100v8L8.300 16.100z" fill="#fff"/></svg>
<div id="tbs"></div>
<svg class="abs" style="left:59px;top:11px" width="18" height="18" viewBox="0 0 18 18"><circle cx="10.700" cy="6.800" r="5.300" fill="none" stroke="#222" stroke-width="1.300"/><path d="M6.900 10.700L1.500 16.200" stroke="#222" stroke-width="1.400"/></svg>
<div class="t" id="tb_search" style="left:87.53px;top:13px;font-size:15px;color:#2b2b2b;letter-spacing:-0.196px">Type here to search</div>
<svg class="abs" style="left:406px;top:10px" width="20" height="20" viewBox="0 0 20 20"><circle cx="9.800" cy="9.800" r="6.800" fill="none" stroke="#fff" stroke-width="2"/></svg>
<svg class="abs" style="left:455px;top:11px" width="19" height="18" viewBox="0 0 19 18"><g fill="none" stroke="#fff" stroke-width="1.100"><path d="M1.500 1v2.300h9.500V1M1.500 16v-2.300h9.500V16"/><rect x="2.500" y="5.800" width="7.500" height="5.200"/><path d="M14.600 1v15"/></g><rect x="13.400" y="4.700" width="2.400" height="3" fill="#fff"/></svg>
<svg class="abs" style="left:504px;top:9px" width="22" height="22" viewBox="0 0 22 22"><path d="M1.200 9.600C2.200 4.300 6.200 1 11.300 1c5.700 0 9.400 4 9.400 9.600v2.300H7.600c.2 3 2.500 4.600 5.700 4.600 2.300 0 4.400-.6 6.300-1.700v4.300c-2 1-4.400 1.500-7 1.500-6 0-9.900-3.500-9.900-9.200 0-3.300 1.600-6 4.400-7.500-1.700 1.300-2.700 2.700-3.100 4.600h10.800c0-2.700-1.500-4.500-4.200-4.500-3.900 0-7.600 2-9.400 4.500z" fill="#1e80d8"/></svg>
<div class="abs" style="left:540px;top:0;width:48px;height:40px;background:#454c51"></div>
<div class="abs" style="left:540px;top:38px;width:48px;height:2px;background:#76b9ed"></div>
<svg class="abs" style="left:552px;top:9px" width="24" height="21" viewBox="0 0 24 21"><path d="M.8 1.400h7.600l1.800 1.800H22.700V19.600H.8z" fill="#e5a93a"/><path d="M.8 4.800H22.700V19.600H.8z" fill="#fcd565"/><path d="M4.200 19.600v-6.800h15.200v6.800z" fill="#4a9fe2"/><path d="M7.600 19.600v-3.500h8.400v3.500z" fill="#fcd565"/><path d="M4.200 12.800l1.700-2h11.800l1.700 2z" fill="#3a86cc"/></svg>
<svg class="abs" style="left:600px;top:6px" width="26" height="26" viewBox="0 0 26 26"><path d="M8.800 8.300V6.200a4.100 4.100 0 0 1 8.200 0v2.100" fill="none" stroke="#fff" stroke-width="1.300"/><path d="M1 7.500h23.200v15.800c0 .8-.6 1.400-1.400 1.400H2.400c-.8 0-1.400-.6-1.400-1.400z" fill="#fff"/><rect x="7.500" y="11.700" width="4.400" height="4.200" fill="#e8452c"/><rect x="13.100" y="11.700" width="4.500" height="4.200" fill="#7cbb3c"/><rect x="7.500" y="17.100" width="4.400" height="4.200" fill="#2a9be4"/><rect x="13.100" y="17.100" width="4.500" height="4.200" fill="#f6b71c"/></svg>
<svg class="abs" style="left:649px;top:8px" width="26" height="24" viewBox="0 0 26 24"><path d="M.9 8.900L12.900.85 25.200 8.900z" fill="#1565b6"/><rect x=".9" y="8.700" width="24.300" height="14.300" fill="#2aa2ea"/><path d="M.9 8.700h24.300L12.900 16.500z" fill="#1a7fd0"/><path d="M3.500 8.700h18.750L12.900 14.400z" fill="#fff"/><path d="M.9 23L12.900 15.600 25.200 23z" fill="#2196e0"/></svg>
<svg class="abs" style="left:698px;top:7px" width="26" height="26" viewBox="0 0 26 26"><defs><linearGradient id="fx" x1=".8" y1="0" x2=".2" y2="1"><stop offset="0" stop-color="#ffd63a"/><stop offset=".45" stop-color="#ff9a1e"/><stop offset=".8" stop-color="#f5412c"/><stop offset="1" stop-color="#e3246a"/></linearGradient></defs>
<path d="M16.600 1.500c2.500 2 3.400 4.300 3.300 6.200C22 9 24 11.300 24 14.700 24 20.400 19.300 25 12.800 25 6.600 25 1.700 20.600 1.700 14.300c0-3.700 1.600-6.400 3-7.600 0 1.200.3 2 .8 2.600C6 6.600 7.500 4.700 9.300 4c-.3 1.200 0 2.100.5 2.700 2.100-.4 4.500-.2 6.300 1 .700-2 .9-4 .5-6.200z" fill="url(#fx)"/>
<path d="M7.200 9.300c2-2.400 5.600-3 8.300-1.700 2.600 1.300 4 4.400 3 7.300-1 3-4.200 4.300-7 3.400 2 .1 3.500-.8 3.900-2.200-1.700.9-3.600.3-4.300-1-.7-1.300 0-2.600 1.400-2.700-1.200-1.300-3.100-1.500-5.300-3.100z" fill="#2a54c8"/><path d="M10.300 5.700c1.700-1 4-1.200 5.900.1l-.8 2.400c-1.800-1-3.500-1.600-5.100-2.500z" fill="#1e9ee8"/>
</svg>
<svg class="abs" style="left:747px;top:8px" width="26" height="23" viewBox="0 0 26 23"><path d="M6.700.9l6 3.900-6 3.900-6-3.900zM18.800.9l6 3.900-6 3.900-6-3.900zM.7 12.600l6-3.900 6 3.900-6 3.900zM18.800 8.700l6 3.900-6 3.900-6-3.900zM6.700 17.800l6-3.900 6.100 3.900-6.100 3.900z" fill="#fff"/></svg>
<svg class="abs" style="left:1652px;top:16px" width="15" height="9" viewBox="0 0 15 9"><path d="M1.300 7.400l6-6 6 6" fill="none" stroke="#fff" stroke-width="1.200"/></svg>
<svg class="abs" style="left:1675px;top:12px" width="18" height="18" viewBox="0 0 18 18"><circle cx="7.300" cy="8" r="5.300" fill="none" stroke="#e6b91e" stroke-width="2"/><path d="M4.600 7.600l2.400 2.700 5.600-8" fill="none" stroke="#f4f0e0" stroke-width="1.300"/><circle cx="11.800" cy="12.300" r="4.300" fill="#2ea84a"/><path d="M9.600 12.300l1.700 1.700 2.800-3.200" fill="none" stroke="#fff" stroke-width="1.200"/></svg>
<svg class="abs" style="left:1698px;top:13px" width="19" height="14" viewBox="0 0 19 14"><rect x="5" y="3.900" width="11.300" height="7.200" fill="none" stroke="#fff" stroke-width="1.100"/><rect x="16.600" y="5.900" width="1.300" height="3.200" fill="#fff"/><rect x="6.600" y="5.500" width="8.100" height="4" fill="#fff"/><path d="M2.400.8v2.300M5 .8v2.300M1.200 3.300h5v1.800c0 1.300-1 2.300-2.500 2.300S1.200 6.400 1.200 5.100zM3.700 7.400v3.500h1.500" fill="none" stroke="#fff" stroke-width="1"/><path d="M1.200 3.300h5v1.800c0 1.300-1 2.300-2.500 2.300S1.200 6.400 1.200 5.100z" fill="#fff"/></svg>
<svg class="abs" style="left:1725px;top:13px" width="15" height="15" viewBox="0 0 15 15"><g fill="none" stroke="#fff" stroke-width="1.100"><path d="M1.200 13.800A12.300 12.300 0 0 1 13.600 1.500"/><path d="M4.500 13.800A9 9 0 0 1 13.600 4.800" /><path d="M7.800 13.800A5.700 5.700 0 0 1 13.600 8.100"/></g><circle cx="12" cy="12.600" r="1.500" fill="#fff"/></svg>
<svg class="abs" style="left:1746px;top:12px" width="19" height="16" viewBox="0 0 19 16"><path d="M1 5.600h2.700l3.600-3.500v11.800l-3.600-3.500H1z" fill="none" stroke="#fff" stroke-width="1"/><g fill="none" stroke="#fff" stroke-width="1"><path d="M9.400 5.600a3.300 3.300 0 0 1 0 4.800"/><path d="M11.500 3.500a6.300 6.300 0 0 1 0 9"/><path d="M13.700 1.400a9.300 9.300 0 0 1 0 13.200"/></g></svg>
<div class="t" id="tb_eng" style="left:1772.63px;top:13.50px;color:#fff;letter-spacing:-1.023px">ENG</div>
<div class="t" id="tb_time" style="left:1811.13px;top:5px;color:#fff;letter-spacing:-0.424px">12:25 PM</div>
<div class="t" id="tb_date" style="left:1808.22px;top:23px;color:#fff;letter-spacing:-0.029px">6/24/2020</div>
<svg class="abs" style="left:1877px;top:10px" width="28" height="28" viewBox="0 0 28 28"><path d="M1.600 1.900h17.200v12.300h-3.400v4.300l-4.300-4.300H1.600z" fill="#fff"/><path d="M4.500 5.200h11.400M4.500 8h11.400M4.500 10.800h11.400" stroke="#1c2329" stroke-width="1.200"/><circle cx="17.200" cy="17.500" r="7.400" fill="#20262b" stroke="#8d9195" stroke-width="1.100"/><text x="17.200" y="22" text-anchor="middle" font-family="Liberation Sans" font-size="12.500" fill="#fff">2</text></svg>
<div class="abs" style="left:1915px;top:0;width:1px;height:40px;background:#5b6166"></div>
</div>
<!--/TASKBAR-->
</div>
</body>
</html>
